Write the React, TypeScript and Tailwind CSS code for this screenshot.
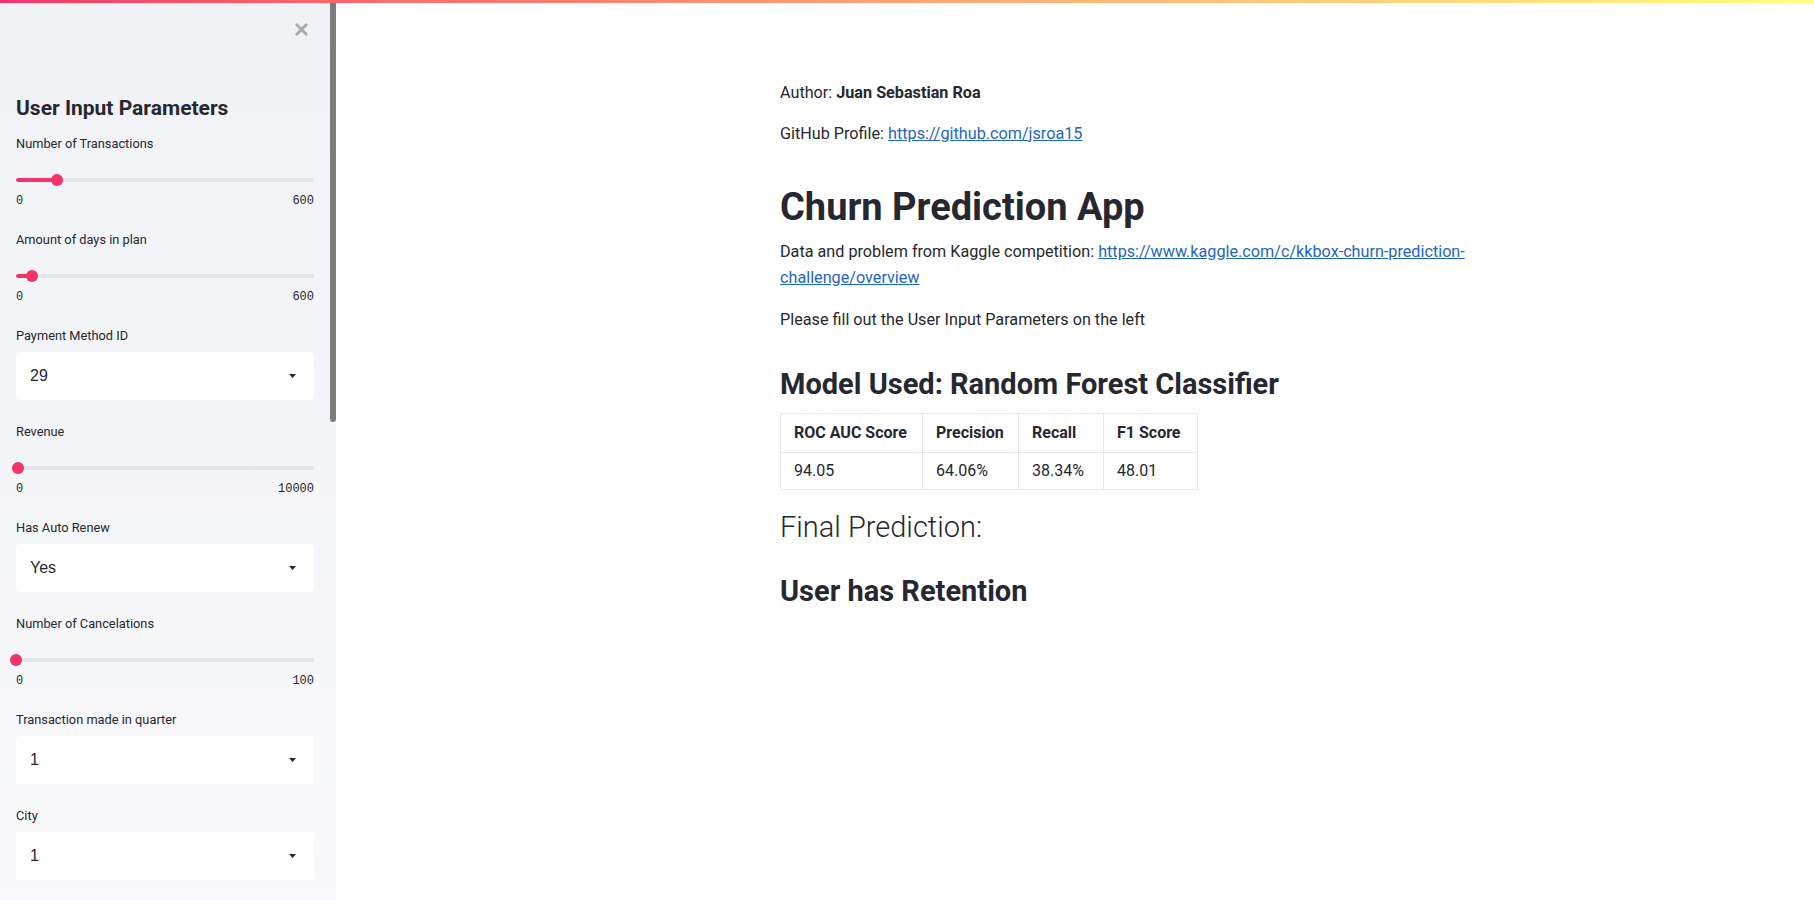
import { X } from "lucide-react";

const font = "font-['Roboto','Liberation_Sans',sans-serif]";

type SliderProps = { label: string; max: string; pct: number };

const SidebarSlider = ({ label, max, pct }: SliderProps) => {
  return (
    <div className="h-[96px]">
      <div className="h-4 text-[12.8px] leading-4 text-[#262730]">{label}</div>
      <div className="relative mt-4 flex h-6 items-center">
        <div className="h-1 w-full rounded-full bg-[#e3e4e8]" />
        <div className="absolute left-0 h-1 rounded-full bg-[#f63366]" style={{ width: `${pct}%` }} />
        <div
          className="absolute h-3 w-3 -translate-x-1/2 rounded-full bg-[#f63366]"
          style={{ left: `${pct}%` }}
        />
      </div>
      <div className="flex h-[18px] justify-between font-['Liberation_Mono',monospace] text-[12px] leading-[18px] text-[#262730]">
        <span>0</span>
        <span>{max}</span>
      </div>
    </div>
  );
};

const SidebarSelect = ({ label, value }: { label: string; value: string }) => {
  return (
    <div className="h-[96px]">
      <div className="h-4 text-[12.8px] leading-4 text-[#262730]">{label}</div>
      <div className="mt-2 flex h-12 items-center justify-between rounded bg-white pl-[14px] pr-[18px]">
        <span className="font-['Liberation_Sans',sans-serif] text-[16px] text-[#262730]">{value}</span>
        {/* caret */}
        <svg width="7" height="4" viewBox="0 0 7 4">
          <path d="M0 0h7L3.5 4z" fill="#262730" />
        </svg>
      </div>
    </div>
  );
};

const metrics = [
  { name: "ROC AUC Score", value: "94.05", w: "w-[142px]" },
  { name: "Precision", value: "64.06%", w: "w-[96px]" },
  { name: "Recall", value: "38.34%", w: "w-[85px]" },
  { name: "F1 Score", value: "48.01", w: "w-[94px]" },
];

export default function App() {
  return (
    <div className={`${font} min-h-[900px] w-[1814px] overflow-hidden bg-white text-[#262730]`}>
      <div className="h-[3px] w-full bg-gradient-to-r from-[#f63366] to-[#fffd80]" />
      <div className="flex h-[897px]">
        {/* Sidebar */}
        <aside className="flex w-[336px] shrink-0 bg-gradient-to-b from-[#f0f2f6] to-[#f9f9fb]">
          <div className="w-[330px] px-4 pt-[17px]">
            <div className="flex h-4 justify-end pr-[3px]">
              <X size={19} strokeWidth={3.6} className="text-[#a9abb0]" />
            </div>
            <h3 className="mt-[59px] h-[26px] text-[21px] font-bold leading-[26px]">User Input Parameters</h3>
            <div className="mt-[15px]">
              <SidebarSlider label="Number of Transactions" max="600" pct={13.8} />
              <SidebarSlider label="Amount of days in plan" max="600" pct={5.4} />
              <SidebarSelect label="Payment Method ID" value="29" />
              <SidebarSlider label="Revenue" max="10000" pct={0.8} />
              <SidebarSelect label="Has Auto Renew" value="Yes" />
              <SidebarSlider label="Number of Cancelations" max="100" pct={0} />
              <SidebarSelect label="Transaction made in quarter" value="1" />
              <SidebarSelect label="City" value="1" />
            </div>
          </div>
          <div className="w-[6px]">
            <div className="h-[419px] rounded-b-[3px] bg-[#7b7b7b]" />
          </div>
        </aside>

        {/* Main */}
        <main className="flex-1 pl-[444px]">
          <div className="w-[698px] pt-[77px] text-[16.2px] leading-[26px]">
            <p>
              Author: <b>Juan Sebastian Roa</b>
            </p>
            <p className="mt-[15px]">
              GitHub Profile:{" "}
              <a className="text-[#1f66bd] underline">https://github.com/jsroa15</a>
            </p>
            <h1 className="mt-[36px] text-[38px] font-bold leading-[48px]">Churn Prediction App</h1>
            <p className="mt-[8px]">
              Data and problem from Kaggle competition:{" "}
              <a className="text-[#1f66bd] underline">
                https://www.kaggle.com/c/kkbox-churn-prediction-challenge/overview
              </a>
            </p>
            <p className="mt-[16px]">Please fill out the User Input Parameters on the left</p>
            <h2 className="mt-[32px] text-[29px] font-bold leading-[38px]">Model Used: Random Forest Classifier</h2>
            <table className="mt-[10px] border-collapse text-[16px]">
              <thead>
                <tr className="h-[39px]">
                  {metrics.map((m) => (
                    <th
                      key={m.name}
                      className={`${m.w} border border-[#e6e9ef] px-[13px] text-left text-[16px] font-bold`}
                    >
                      {m.name}
                    </th>
                  ))}
                </tr>
              </thead>
              <tbody>
                <tr className="h-[37px]">
                  {metrics.map((m) => (
                    <td key={m.name} className="border border-[#e6e9ef] px-[13px]">
                      {m.value}
                    </td>
                  ))}
                </tr>
              </tbody>
            </table>
            <div className="mt-[18px] text-[29px] font-light leading-[38px]">Final Prediction:</div>
            <h3 className="mt-[26px] text-[29px] font-bold leading-[38px]">User has Retention</h3>
          </div>
        </main>
      </div>
    </div>
  );
}
